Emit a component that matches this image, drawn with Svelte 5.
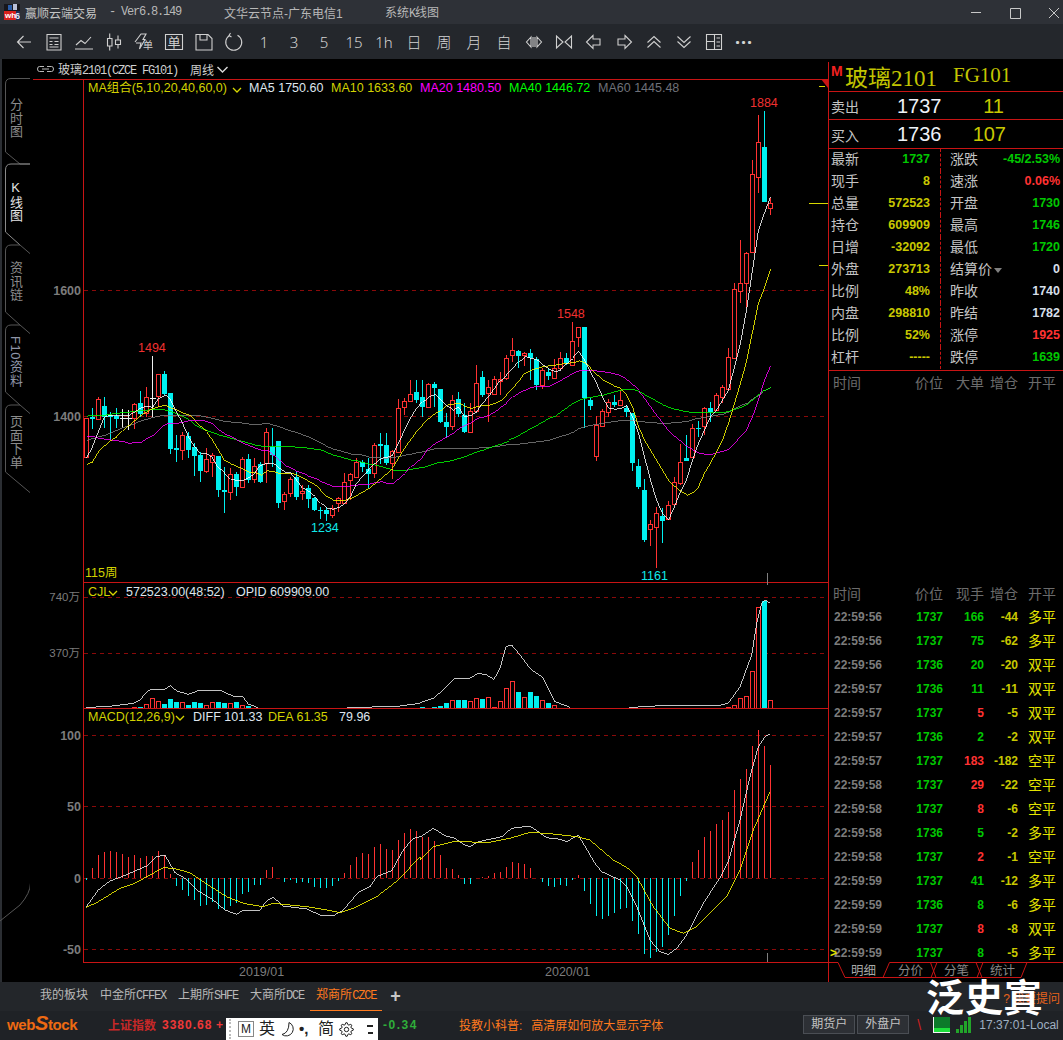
<script lang="ts">
  // Weekly K-line screen for FG101. Chart values are stored in pixels * 3 (tall, easy to read off the pane).
  const y8 = (v: number) => 300 + v / 3

  // kind: 0 red hollow, 1 cyan solid, 2 white doji — [kind, high, top, bottom, low]
  const candles = [
    [0,355,355,470,475],[1,325,350,357,388],[0,292,298,357,360],[1,292,318,350,385],[1,335,345,350,420],[1,325,348,357,385],
    [2,328,355,355,385],[2,330,355,355,390],[0,310,313,355,388],[1,273,308,342,350],[0,262,292,340,350],[2,168,295,295,350],
    [0,223,223,288,320],[1,213,222,283,285],[1,279,279,446,462],[1,405,445,450,486],[0,395,405,450,480],[1,395,408,450,475],
    [1,430,440,467,527],[1,455,465,514,545],[0,445,478,512,520],[0,460,465,485,530],[1,468,468,570,590],[1,500,570,575,640],
    [0,505,523,575,600],[1,515,522,560,588],[0,470,477,560,565],[1,463,477,540,550],[0,475,498,537,550],[1,485,492,547,550],
    [0,385,397,490,548],[1,385,441,465,500],[1,423,423,608,623],[0,575,582,602,630],[0,530,538,578,590],[1,512,532,590,600],
    [0,555,572,580,600],[1,555,565,597,625],[1,590,595,630,632],[1,620,630,634,656],[1,620,630,642,662],[0,615,625,644,655],
    [0,590,595,610,635],[0,520,545,608,610],[0,520,523,540,600],[0,473,487,530,535],[1,480,487,500,515],[1,475,507,522,565],
    [0,430,435,520,535],[1,398,432,437,492],[1,400,435,488,495],[0,450,453,488,538],[0,297,325,455,457],[0,295,304,322,345],
    [0,240,282,302,305],[1,240,276,300,310],[1,240,292,322,350],[0,250,253,322,325],[1,245,253,265,320],[1,268,268,365,370],
    [1,340,366,380,413],[0,285,299,377,390],[1,275,297,342,350],[1,310,345,395,400],[0,310,332,395,400],[0,195,250,332,335],
    [1,213,232,285,290],[0,240,262,280,365],[0,228,238,282,285],[0,215,238,243,285],[0,165,175,235,240],[0,113,151,166,185],
    [1,150,154,167,205],[0,155,160,166,198],[1,148,160,175,240],[1,172,178,255,270],[0,205,210,255,268],[1,205,217,228,240],
    [0,178,205,233,233],[0,155,175,205,210],[1,160,175,190,195],[0,65,124,195,195],[0,82,82,112,140],[1,82,82,295,385],
    [1,295,300,318,330],[0,348,375,467,483],[0,327,334,379,380],[0,298,305,335,350],[1,285,305,315,320],[0,270,301,315,318],
    [1,315,323,335,350],[1,338,338,488,513],[1,478,498,560,568],[1,538,570,720,725],[0,660,673,688,738],[0,622,638,682,803],
    [1,625,648,662,728],[0,603,616,658,660],[0,530,545,612,612],[0,432,485,548,556],[1,405,475,482,482],[0,372,385,472,475],
    [1,362,384,388,412],[0,320,325,379,405],[1,307,325,337,365],[0,280,284,330,332],[0,255,262,290,310],[0,145,172,268,270],
    [0,-51,-33,174,174],[0,-180,-51,-27,9],[0,-144,-141,-51,24],[0,-420,-378,-144,-144],[0,-555,-474,-369,-321],[1,-567,-459,-294,-294],
    [0,-306,-291,-276,-255],
  ]

  const ma = [
    { color: '#808080', ys: [420,415,410,405,398,390,382,377,370,362,358,352,348,345,345,345,346,346,347,348,352,356,360,365,366,367,370,372,373,372,370,375,380,388,393,398,405,412,420,430,440,448,452,457,462,462,466,472,473,474,474,472,470,465,462,458,455,450,446,445,445,445,445,445,445,445,442,442,440,437,434,433,432,430,428,425,423,420,415,408,404,396,385,380,376,373,370,367,364,362,362,362,364,366,368,369,371,370,367,366,365,358,355,352,349,345,342,335,325,315,310,295,285,270,262] },
    { color: '#00ff00', ys: [348,347,346,345,342,340,338,336,334,332,330,328,328,330,335,342,350,360,375,385,392,398,405,410,415,420,425,430,436,438,438,438,438,438,440,442,443,445,448,450,458,465,470,475,480,482,488,492,495,500,505,510,512,512,508,505,502,497,490,487,485,480,475,470,462,455,450,443,437,432,425,415,405,395,385,375,365,355,348,335,322,310,300,295,292,288,285,280,275,270,268,268,275,285,295,305,315,323,328,332,335,338,338,338,338,338,338,333,328,322,312,298,282,270,262] },
    { color: '#ff00ff', ys: [408,410,415,418,420,422,425,430,428,427,415,405,388,373,370,370,366,362,360,360,365,372,390,403,410,420,430,437,445,450,450,465,480,497,505,515,520,530,535,545,552,560,560,560,557,555,553,552,548,545,550,550,535,520,500,485,470,445,430,420,410,400,385,375,368,355,352,345,335,320,308,290,278,270,262,260,260,258,250,240,230,220,212,210,210,213,215,218,222,228,240,255,272,295,320,345,368,392,410,425,440,450,460,463,463,458,453,448,430,410,390,350,300,240,198] },
    { color: '#ffff00', ys: [493,485,455,435,420,410,392,375,360,345,335,325,320,316,325,330,340,345,362,380,395,420,450,482,492,500,508,516,518,525,512,515,520,520,520,525,535,545,555,570,590,600,600,600,595,585,575,565,550,535,520,505,475,445,420,395,375,355,340,330,315,312,310,320,325,320,315,315,310,300,285,265,245,220,210,205,200,197,195,192,190,188,182,190,205,225,240,250,260,265,285,320,380,420,450,480,510,540,560,575,585,577,560,520,490,455,420,370,310,250,185,96,9,-36,-93] },
    { color: '#ffffff', ys: [475,440,395,350,345,345,345,345,335,322,320,322,295,285,300,335,370,410,440,460,462,475,505,520,538,542,540,532,520,495,490,490,505,517,518,540,565,575,590,610,625,628,622,610,590,550,530,510,490,475,472,465,430,390,355,325,305,290,283,300,318,330,320,350,345,335,310,290,265,240,225,205,185,170,175,180,195,208,215,210,190,175,153,180,215,250,290,325,328,325,315,350,400,470,540,600,640,660,620,575,540,480,430,390,350,330,300,270,200,129,30,-90,-210,-261,-309] },
  ]

  const cx = (i: number) => 86 + 6 * i + 0.5
  const maPoints = (ys: number[]) => ys.map((v, i) => `${cx(i)},${y8(v).toFixed(1)}`).join(' ')

  // lower panes are read in px*3 too, baseline y = 580
  const y6 = (v: number) => 580 + v / 3
  const traced = (left: number[][], right: number[][]) =>
    [...left.map(([x, y]) => [x / 3, y6(y)]), ...right.map(([x, y]) => [420 + x / 3, y6(y)])]
      .map(([x, y]) => `${x.toFixed(1)},${y.toFixed(1)}`)
      .join(' ')

  const volBars = [
    [8,382,0],[9,382,1],[10,373,0],[11,355,0],[12,364,0],[13,373,1],[14,357,1],[15,366,1],[16,367,0],[17,376,1],[18,366,1],[19,369,1],
    [20,376,0],[21,367,0],[22,366,1],[23,369,1],[24,370,0],[25,366,1],[26,376,0],[27,378,1],[28,383,1],
    [56,382,1],[58,381,1],[59,378,1],[60,370,1],[61,361,0],[62,360,1],[63,360,1],[64,364,0],[65,355,0],[66,357,1],[67,352,0],[68,382,0],
    [69,364,0],[70,325,0],[71,304,0],[72,336,1],[73,352,0],[74,336,1],[75,348,1],[76,361,0],[77,370,1],[78,376,0],
    [107,382,0],[108,376,0],[109,355,0],[110,349,0],[111,273,0],[112,82,0],[113,62,1],[114,361,0],
  ]
  const volLineA = traced(
    [[258,382],[320,380],[400,370],[420,360],[440,335],[455,328],[490,330],[512,317],[530,333],[565,343],[600,330],[620,333],[660,330],[680,340],[700,348],[728,350],[745,372],[775,383]],
    [],
  )
  const volLineB = traced(
    [[1040,383],[1150,380],[1200,378],[1260,370]],
    [[0,368],[40,355],[70,330],[105,295],[150,295],[175,280],[200,285],[222,298],[240,265],[258,200],[275,195],[300,225],[332,268],[368,292],[405,365],[450,382]],
  )
  const volLineC = traced(
    [],
    [[628,382],[680,380],[718,377],[895,377],[925,370],[960,320],[995,225],[1010,130],[1025,70],[1035,60],[1050,70]],
  )

  const macdEnds = [
    900,865,825,817,813,816,822,831,826,834,829,827,813,825,882,918,930,947,960,978,975,965,987,990,978,970,942,935,915,915,870,862,893,905,900,908,905,908,920,924,924,917,903,880,855,832,820,822,801,793,808,810,780,758,747,753,
    772,770,783,825,865,867,885,911,911,893,892,888,880,876,861,847,849,852,864,895,905,918,920,915,917,899,885,932,971,1007,1017,1007,998,987,983,1022,1061,1122,1133,1115,1100,1065,1008,948,902,846,810,770,753,732,720,696,630,597,567,498,450,498,555,
  ]
  const diffLine = traced(
    [[258,982],[295,930],[330,903],[370,888],[400,875],[440,858],[470,830],[495,825],[525,878],[555,895],[590,930],[640,960],[675,990],[710,1003],[730,990],[780,990],[800,962],[820,952],[850,978],[920,987],[960,1005],[1000,1007],[1030,990],[1075,937],[1110,920],[1130,890],[1175,872],[1210,810],[1240,775],[1260,770]],
    [[0,772],[40,745],[80,770],[100,772],[135,795],[150,800],[175,785],[245,770],[275,745],[330,738],[380,773],[420,778],[440,785],[475,765],[525,850],[545,875],[600,900],[620,920],[650,980],[690,1080],[720,1115],[745,1123],[770,1105],[800,1065],[850,970],[905,885],[925,845],[960,720],[990,590],[1015,500],[1035,470],[1050,462]],
  )
  const deaLine = traced(
    [[258,982],[290,968],[360,925],[400,912],[450,885],[490,863],[520,865],[570,878],[620,912],[680,950],[730,970],[790,980],[820,970],[920,980],[980,990],[1020,998],[1060,985],[1130,950],[1195,900],[1260,830]],
    [[0,840],[40,800],[100,785],[210,787],[270,775],[330,757],[400,762],[470,770],[510,780],[580,840],[620,862],[650,890],[700,980],[750,1045],[790,1060],[830,1040],[870,1000],[920,950],[960,870],[1000,750],[1050,635]],
  )

  const toolIcons = [
    'M17 10H4M9.5 4L3.5 10L9.5 16',
    'M3 2.5H17V18H3ZM5.5 6H14.5M5.5 9.5H8.5M10.5 9.5H14.5M5.5 12.5H8.5M10.5 12.5H14.5M5.5 15H14.5',
    'M1 17H19M2 13L7 8.5L11 11.5L17 5',
    'M3.5 6.5H8V14H3.5ZM5.7 1.5V6.5M5.7 14V18.5M11.5 8H16.5V12.5H11.5ZM14 3.5V8M14 12.5V16.5',
  ]
  const periods = ['1', '3', '5', '15', '1h', '日', '周', '月', '自']

  const tabs = [
    { label: '分时图' },
    { label: 'K线图', active: true },
    { label: '资讯链' },
    { label: 'F10资料', f10: true },
    { label: '页面下单' },
  ]

  const quote = [
    ['最新', '1737', 'g', '涨跌', '-45/2.53%', 'g'],
    ['现手', '8', 'y', '速涨', '0.06%', 'r'],
    ['总量', '572523', 'y', '开盘', '1730', 'g'],
    ['持仓', '609909', 'y', '最高', '1746', 'g'],
    ['日增', '-32092', 'y', '最低', '1720', 'g'],
    ['外盘', '273713', 'y', '结算价', '0', 'w'],
    ['比例', '48%', 'y', '昨收', '1740', 'w'],
    ['内盘', '298810', 'y', '昨结', '1782', 'w'],
    ['比例', '52%', 'y', '涨停', '1925', 'r'],
    ['杠杆', '-----', 'y', '跌停', '1639', 'g'],
  ]

  const ticks = [
    ['22:59:56', '1737', '166', 'g', '-44', '多平'],
    ['22:59:56', '1737', '75', 'g', '-62', '多平'],
    ['22:59:56', '1736', '20', 'g', '-20', '双平'],
    ['22:59:57', '1736', '11', 'g', '-11', '双平'],
    ['22:59:57', '1737', '5', 'r', '-5', '双平'],
    ['22:59:57', '1736', '2', 'g', '-2', '双平'],
    ['22:59:57', '1737', '183', 'r', '-182', '空平'],
    ['22:59:58', '1737', '29', 'r', '-22', '空平'],
    ['22:59:58', '1737', '8', 'r', '-6', '空平'],
    ['22:59:58', '1736', '5', 'g', '-2', '多平'],
    ['22:59:58', '1737', '2', 'r', '-1', '空平'],
    ['22:59:59', '1737', '41', 'g', '-12', '多平'],
    ['22:59:59', '1736', '8', 'g', '-6', '多平'],
    ['22:59:59', '1737', '8', 'r', '-8', '双平'],
    ['22:59:59', '1737', '8', 'g', '-5', '多平'],
  ]

  const exchanges = [
    ['我的板块', ''],
    ['中金所', 'CFFEX'],
    ['上期所', 'SHFE'],
    ['大商所', 'DCE'],
    ['郑商所', 'CZCE'],
  ]

  // 8-tooth gear outline for the input method bar
  const gearPath = Array.from({ length: 32 }, (_, k) => {
    const a = ((k - 0.5) / 32) * Math.PI * 2
    const r = k % 4 < 2 ? 6.8 : 5
    return `${k ? 'L' : 'M'}${(7.5 + r * Math.cos(a)).toFixed(2)} ${(7.5 + r * Math.sin(a)).toFixed(2)}`
  }).join('') + 'Z'
</script>

{#snippet chevron(x: number, y: number, color: string)}
  <polyline class="chev" points="{x},{y} {x + 4},{y + 4} {x + 8},{y}" stroke={color} />
{/snippet}

<div class="app">
  <header class="titlebar">
    <svg class="logo" width="16" height="16" viewBox="0 0 16 16">
      <rect width="16" height="16" fill="#17171c" />
      <rect x="0" y="7" width="13" height="9" fill="#d8211c" />
      <rect x="4" y="1" width="4" height="5" fill="#2a5ca8" />
      <rect x="9" y="0" width="4" height="6" fill="#b8c0d8" />
      <rect x="12" y="7" width="4" height="9" fill="#1b2c58" />
      <text x="1" y="14" class="logo-text">wh</text>
      <text x="11" y="15" class="logo-six">6</text>
    </svg>
    <span class="app-name">赢顺云端交易</span>
    <span class="version">- Ver6.8.149</span>
    <span class="node">文华云节点-广东电信1</span>
    <span class="sys">系统<span class="latin">K</span>线图</span>
    <div class="win-ctl">
      <svg width="88" height="14" viewBox="0 0 88 14" fill="none" stroke="#c8c8c8">
        <path d="M0 7.5H10M39.5 3.5H49.5V13.5H39.5ZM78 3L88 13M88 3L78 13" />
      </svg>
    </div>
  </header>

  <nav class="toolbar">
    {#each toolIcons as d}
      <span class="tool">
        <svg width="20" height="20" viewBox="0 0 20 20"><path {d} /></svg>
      </span>
    {/each}
    <span class="tool">
      <svg width="20" height="20" viewBox="0 0 20 20">
        <path d="M1 10L7 2H12L9 7.5H11L5.5 17L7 11H2" />
        <text x="9" y="17" class="icon-char">单</text>
      </svg>
    </span>
    <span class="tool">
      <svg width="20" height="20" viewBox="0 0 20 20">
        <path d="M1.5 2.5H18.5V17.5H1.5Z" />
        <text x="3.5" y="15" class="icon-char big">单</text>
      </svg>
    </span>
    <span class="tool">
      <svg width="20" height="20" viewBox="0 0 20 20"><path d="M2 2.5H14L18 6.5V18H2ZM6 2.5V8H13V2.5" /></svg>
    </span>
    <span class="tool">
      <svg width="20" height="20" viewBox="0 0 20 20"><path d="M13.5 3.2A8 8 0 1 1 6 3.2M6.5 1L5 3.5L7.5 5" /></svg>
    </span>
    {#each periods as p}
      <span class="tool text-tool">{p}</span>
    {/each}
    <span class="tool">
      <svg width="20" height="20" viewBox="0 0 20 20"><path d="M7 5L2.5 10L7 15ZM13 5L17.5 10L13 15ZM9 5V15M11 5V15" /></svg>
    </span>
    <span class="tool">
      <svg width="20" height="20" viewBox="0 0 20 20"><path d="M2.5 4V16L9 10ZM17.5 4V16L11 10Z" /></svg>
    </span>
    <span class="tool">
      <svg width="20" height="20" viewBox="0 0 20 20"><path d="M9 3.5L2.5 10L9 16.5V13H16V7H9Z" /></svg>
    </span>
    <span class="tool">
      <svg width="20" height="20" viewBox="0 0 20 20"><path d="M11 3.5L17.5 10L11 16.5V13H4V7H11Z" /></svg>
    </span>
    <span class="tool">
      <svg width="20" height="20" viewBox="0 0 20 20"><path d="M3.5 10.5L10 4.5L16.5 10.5M3.5 15.5L10 9.5L16.5 15.5" /></svg>
    </span>
    <span class="tool">
      <svg width="20" height="20" viewBox="0 0 20 20"><path d="M3.5 4.5L10 10.5L16.5 4.5M3.5 9.5L10 15.5L16.5 9.5" /></svg>
    </span>
    <span class="tool">
      <svg width="20" height="20" viewBox="0 0 20 20"><path d="M2.5 2.5H17.5V17.5H2.5ZM10.5 2.5V17.5M2.5 9.5H10.5M12.5 6H16M12.5 10H16M12.5 14H16" /></svg>
    </span>
    <span class="tool text-tool dots">···</span>
  </nav>

  <div class="body">
    <aside class="rail">
      <svg class="rail-lines" width="30" height="923" viewBox="0 59 30 923" fill="none" stroke="#565656">
        <path d="M5.5 152V84Q5.5 78.5 11 78.5H30.5V164H20L5.5 152" />
        <path stroke="#8a8a8a" d="M30.5 164H11Q5.5 164 5.5 170V232L20 245" />
        <path d="M20 245H11Q5.5 245 5.5 251V312L20 325M20 245L30.5 254V325" />
        <path d="M20 325H11Q5.5 325 5.5 331V392L20 405M20 325L30.5 334V405" />
        <path d="M20 405H11Q5.5 405 5.5 411V472L30.5 493M20 405L30.5 414V883Q30.5 893 20 905L0 921" />
      </svg>
      {#each tabs as tab}
        <div class="side-tab" class:active={tab.active} class:f10={tab.f10}>{tab.label}</div>
      {/each}
    </aside>

    <section class="charts">
      <div class="symbol-bar">
        <svg width="17" height="8" viewBox="0 0 17 8" fill="none" stroke="#b8b8b8">
          <path d="M7 1.5H2.5Q0.5 1.5 0.5 4T2.5 6.5H7M10 1.5H14.5Q16.5 1.5 16.5 4T14.5 6.5H10M5 4H12" />
        </svg>
        <span class="symbol">玻璃<span class="latin">2101(CZCE FG101)</span></span>
        <span class="period">周线</span>
        <svg width="11" height="7" viewBox="0 0 11 7" fill="none" stroke="#d8d8d8" stroke-width="1.4"><path d="M0.5 1L5.5 6L10.5 1" /></svg>
      </div>

      <svg class="pane" width="798" height="503" viewBox="30 79 798 503">
        <g class="crisp">
          <line x1="33" y1="79.5" x2="828" y2="79.5" class="frame" />
          <line x1="83.5" y1="79" x2="83.5" y2="582" class="frame" />
          <line x1="84" y1="290.5" x2="828" y2="290.5" class="grid" />
          <line x1="84" y1="416.5" x2="828" y2="416.5" class="grid" />
          <path d="M809 203.5H828M819 265.5H828M819 86.5H825" stroke="#d8d800" />
          <line x1="767.5" y1="573" x2="767.5" y2="582" stroke="#808080" />
          {#each candles as [kind, hi, top, bot, lo], i}
            {@const t = Math.round(y8(top))}
            {@const b = Math.round(y8(bot))}
            <line x1={cx(i)} x2={cx(i)} y1={Math.round(y8(hi))} y2={Math.round(y8(lo))} stroke={kind === 0 ? '#ff3232' : kind === 1 ? '#00f0f0' : '#f0f0f0'} />
            {#if kind === 0}
              <rect x={cx(i) - 2} y={t + 0.5} width="4" height={b - t} fill="#000" stroke="#ff3232" />
            {:else if kind === 1}
              <rect x={cx(i) - 2.5} y={t} width="5" height={Math.max(b - t, 1)} fill="#00f0f0" />
            {:else}
              <line x1={cx(i) - 3} x2={cx(i) + 3} y1={t + 0.5} y2={t + 0.5} stroke="#f0f0f0" />
            {/if}
          {/each}
          {#each ma as line}
            <polyline class="curve" points={maPoints(line.ys)} stroke={line.color} />
          {/each}
        </g>
        <polygon points="821,79 828,79 828,88" fill="#c81414" />

        <text x="81" y="295" class="axis" text-anchor="end">1600</text>
        <text x="81" y="421" class="axis" text-anchor="end">1400</text>

        <text x="88" y="92" class="legend y">MA组合(5,10,20,40,60,0)</text>
        {@render chevron(233, 88, '#d8d800')}
        <text x="249" y="92" class="legend w">MA5 1750.60</text>
        <text x="331" y="92" class="legend y">MA10 1633.60</text>
        <text x="420" y="92" class="legend" fill="#ff00ff">MA20 1480.50</text>
        <text x="509" y="92" class="legend" fill="#00ff00">MA40 1446.72</text>
        <text x="598" y="92" class="legend" fill="#6e7078">MA60 1445.48</text>

        <text x="138" y="352" class="mark red">1494</text>
        <text x="557" y="318" class="mark red">1548</text>
        <text x="750" y="107" class="mark red">1884</text>
        <text x="311" y="532" class="mark cyan">1234</text>
        <text x="641" y="580" class="mark cyan">1161</text>
        <text x="85" y="577" class="legend y">115周</text>
      </svg>

      <svg class="pane" width="798" height="126" viewBox="30 582 798 126">
        <g class="crisp">
          <line x1="84" y1="582.5" x2="828" y2="582.5" class="frame" />
          <line x1="83.5" y1="582" x2="83.5" y2="708" class="frame" />
          <line x1="84" y1="597.5" x2="828" y2="597.5" class="grid" />
          <line x1="84" y1="653.5" x2="828" y2="653.5" class="grid" />
          <line x1="767.5" y1="582" x2="767.5" y2="585" stroke="#808080" />
          {#each volBars as [i, top, cyan]}
            {@const t = Math.round(y6(top))}
            {#if cyan}
              <rect x={cx(i) - 2.5} y={t} width="5" height={708 - t} fill="#00f0f0" />
            {:else}
              <rect x={cx(i) - 2} y={t + 0.5} width="4" height={708 - t} fill="#000" stroke="#ff3232" />
            {/if}
          {/each}
          <polyline class="curve" points={volLineA} stroke="#f4f4f4" />
          <polyline class="curve" points={volLineB} stroke="#f4f4f4" />
          <polyline class="curve" points={volLineC} stroke="#f4f4f4" />
        </g>
        <text x="80" y="601" class="axis thin" text-anchor="end">740万</text>
        <text x="80" y="657" class="axis thin" text-anchor="end">370万</text>
        <text x="88" y="596" class="legend y">CJL</text>
        {@render chevron(109, 591, '#d8d800')}
        <text x="126" y="596" class="legend w">572523.00(48:52)</text>
        <text x="236" y="596" class="legend w">OPID 609909.00</text>
      </svg>

      <svg class="pane" width="798" height="255" viewBox="30 708 798 255">
        <g class="crisp">
          <line x1="83" y1="708.5" x2="828" y2="708.5" class="frame" />
          <line x1="83" y1="962.5" x2="828" y2="962.5" class="frame" />
          <line x1="83.5" y1="708" x2="83.5" y2="962" class="frame" />
          <line x1="84" y1="735.5" x2="828" y2="735.5" class="grid" />
          <line x1="84" y1="806.5" x2="828" y2="806.5" class="grid" />
          <line x1="84" y1="878.5" x2="828" y2="878.5" class="grid" />
          <line x1="84" y1="949.5" x2="828" y2="949.5" class="grid" />
          <line x1="767.5" y1="953" x2="767.5" y2="962" stroke="#808080" />
          {#each macdEnds as end, i}
            {#if end !== 895}
              <line x1={cx(i)} x2={cx(i)} y1={y6(895)} y2={Math.round(y6(end))} stroke={end < 895 ? '#ff3232' : '#00f0f0'} />
            {/if}
          {/each}
          <polyline class="curve" points={diffLine} stroke="#f4f4f4" />
          <polyline class="curve" points={deaLine} stroke="#ffff00" />
        </g>
        <text x="81" y="740" class="axis" text-anchor="end">100</text>
        <text x="81" y="811" class="axis" text-anchor="end">50</text>
        <text x="81" y="883" class="axis" text-anchor="end">0</text>
        <text x="81" y="954" class="axis" text-anchor="end">-50</text>
        <text x="88" y="721" class="legend y">MACD(12,26,9)</text>
        {@render chevron(176, 716, '#d8d800')}
        <text x="193" y="721" class="legend w">DIFF 101.33</text>
        <text x="268" y="721" class="legend y">DEA 61.35</text>
        <text x="339" y="721" class="legend w">79.96</text>
      </svg>

      <div class="dates">
        <span class="date-2019">2019/01</span>
        <span class="date-2020">2020/01</span>
      </div>
    </section>

    <aside class="panel">
      <div class="contract">
        <span class="m">M</span>
        <span class="name">玻璃2101</span>
        <span class="code">FG101</span>
      </div>
      <div class="book">
        <span class="lbl">卖出</span><span class="price">1737</span><span class="qty">11</span>
      </div>
      <div class="book bid">
        <span class="lbl">买入</span><span class="price">1736</span><span class="qty">107</span>
      </div>
      <div class="quote">
        {#each quote as [l1, v1, c1, l2, v2, c2]}
          <div class="q-row">
            <div class="q-left"><span class="lbl">{l1}</span><b class={c1}>{v1}</b></div>
            <div class="q-right">
              <span class="lbl">{l2}{#if l2 === '结算价'}<i class="drop"></i>{/if}</span><b class={c2}>{v2}</b>
            </div>
          </div>
        {/each}
      </div>
      <div class="tick-head"><span>时间</span><span>价位</span><span>大单</span><span>增仓</span><span>开平</span></div>
      <div class="spacer"></div>
      <div class="tick-head second"><span>时间</span><span>价位</span><span>现手</span><span>增仓</span><span>开平</span></div>
      <div class="ticks">
        {#each ticks as [time, price, qty, side, chg, kind], i}
          <div class="tick">
            {#if i === ticks.length - 1}<span class="cursor">&gt;</span>{/if}
            <span class="time">{time}</span>
            <b class="g">{price}</b>
            <b class={side}>{qty}</b>
            <b class="y">{chg}</b>
            <span class="kind">{kind}</span>
          </div>
        {/each}
      </div>
      <svg class="detail-tabs" width="234" height="20" viewBox="829 962 234 20" fill="none" stroke="#c81414">
        <path d="M829 962.5H838L845 977.5H883L889.5 962.5H1063" />
        <path d="M883 977.5H936L930.5 962.5M931 977.5L937 962.5M931 977.5H982L976 962.5M977 977.5L983 962.5M977 977.5H1021L1027 962.5" />
        <text x="851" y="975" class="tab-on">明细</text>
        <text x="898" y="975" class="tab-off">分价</text>
        <text x="944" y="975" class="tab-off">分笔</text>
        <text x="990" y="975" class="tab-off">统计</text>
      </svg>
    </aside>
  </div>

  <div class="tabbar">
    {#each exchanges as [name, code], i}
      <span class="ex" class:current={i === 4}>{name}{#if code}<span class="latin">{code}</span>{/if}</span>
    {/each}
    <span class="add">+</span>
    <span class="ask"><span class="ask-q">?</span>我要提问</span>
  </div>

  <footer class="status">
    <span class="brand">web<span class="brand-s">S</span>tock</span>
    <span class="index">上证指数</span>
    <b class="index-val">3380.68</b>
    <b class="index-val plus">+</b>
    <b class="index-chg">-0.34</b>
    <span class="notice">投教小科普:</span>
    <span class="notice msg">高清屏如何放大显示字体</span>
    <span class="acct first">期货户</span>
    <span class="acct">外盘户</span>
    <span class="slash">\</span>
    <svg class="net" width="17" height="16" viewBox="0 0 17 16">
      <rect width="17" height="16" fill="#0c7a2a" />
      <rect y="11" width="17" height="5" fill="#1ee03c" />
      <path d="M0.5 16V0M0 15.5H17" stroke="#f4f4f4" />
    </svg>
    <svg class="signal" width="16" height="16" viewBox="0 0 16 16" fill="#22a52a">
      <rect x="0" y="12" width="3" height="4" /><rect x="4" y="8" width="3" height="8" /><rect x="8" y="4" width="3" height="12" /><rect x="12" y="0" width="3" height="16" />
    </svg>
    <span class="clock">17:37:01-Local</span>
  </footer>

  <!-- input method bar and the watermark sit over the window -->
  <div class="ime">
    <i class="grip"></i>
    <span class="ime-m">M</span>
    <span class="ime-ch">英</span>
    <svg width="14" height="16" viewBox="0 0 14 16" fill="none" stroke="#222"><path d="M9 1.5A7 7 0 1 1 2 13.5Q9 12 9 1.5Z" /></svg>
    <span class="ime-p">•,</span>
    <span class="ime-ch">简</span>
    <svg width="15" height="15" viewBox="0 0 15 15" fill="none" stroke="#222"><path d={gearPath} /><circle cx="7.5" cy="7.5" r="2.2" /></svg>
    <span class="ime-more"></span>
  </div>
  <div class="watermark">泛史寘</div>
</div>

<style>
  :global(body) {
    background: #000;
  }

  .app {
    position: relative;
    width: 1063px;
    height: 1040px;
    overflow: hidden;
    display: flex;
    flex-direction: column;
    background: #000;
    font-family: 'Liberation Sans', 'Noto Sans CJK SC', sans-serif;
    font-size: 12px;
    color: #c8c8c8;
  }

  /* narrow latin mixed into Chinese labels */
  .latin {
    font: 12px 'Liberation Mono', monospace;
    letter-spacing: -1.2px;
  }

  /* title bar */
  .titlebar {
    height: 24px;
    background: #2e3137;
    display: flex;
    align-items: center;
    position: relative;
    flex: none;
  }
  .logo {
    margin-left: 4px;
  }
  .logo-text {
    font: bold 8px 'Liberation Sans', sans-serif;
    fill: #fff;
  }
  .logo-six {
    font: bold 9px 'Liberation Sans', sans-serif;
    fill: #dfe6f8;
  }
  .app-name {
    margin-left: 5px;
    width: 72px;
    white-space: nowrap;
    color: #c4c4c4;
  }
  .version {
    margin-left: 12px;
    width: 87px;
    font: 12px 'Liberation Mono', monospace;
    letter-spacing: -1.2px;
    color: #b8b8b8;
    white-space: nowrap;
  }
  .node {
    margin-left: 28px;
    width: 119px;
    white-space: nowrap;
    color: #b8b8b8;
  }
  .sys {
    margin-left: 42px;
    white-space: nowrap;
    color: #b8b8b8;
  }
  .win-ctl {
    margin-left: auto;
    margin-right: 4px;
    display: flex;
  }

  /* toolbar */
  .toolbar {
    height: 35px;
    flex: none;
    background: #24272c;
    display: flex;
    align-items: center;
    padding-left: 9px;
    box-sizing: border-box;
  }
  .tool {
    width: 30px;
    display: flex;
    justify-content: center;
    color: #d4d4d4;
  }
  .tool svg {
    fill: none;
    stroke: #d0d0d0;
    stroke-width: 1.1;
  }
  .icon-char {
    font-size: 10px;
    stroke: none;
    fill: #d0d0d0;
  }
  .icon-char.big {
    font-size: 13px;
  }
  .text-tool {
    font-family: 'Noto Sans', 'Noto Sans CJK SC', sans-serif;
    font-weight: 300;
    font-size: 15px;
    line-height: 20px;
  }
  .dots {
    font-weight: bold;
    font-size: 18px;
    letter-spacing: 1px;
  }

  /* main area */
  .body {
    height: 923px;
    flex: none;
    display: flex;
  }

  .rail {
    position: relative;
    width: 30px;
    flex: none;
    padding-top: 20px;
    box-sizing: border-box;
    border-left: 2px solid #2b2e33;
    display: flex;
    flex-direction: column;
    margin-right: 0;
  }
  .rail-lines {
    position: absolute;
    left: -2px;
    top: 0;
  }
  .side-tab {
    position: relative;
    height: 80px;
    writing-mode: vertical-rl;
    text-align: center;
    width: 28px;
    padding-right: 2px;
    box-sizing: border-box;
    font-size: 13px;
    line-height: 28px;
    letter-spacing: 0.5px;
    color: #8a8a8a;
    padding-bottom: 7px;
    display: flex;
    justify-content: center;
    align-items: center;
    text-orientation: mixed;
  }
  .side-tab:first-of-type {
    height: 86px;
  }
  .side-tab.active {
    color: #e4e4e4;
    text-orientation: upright;
  }
  .side-tab.f10 {
    color: #8f95a8;
  }

  .charts {
    width: 798px;
    flex: none;
    display: flex;
    flex-direction: column;
  }
  .symbol-bar {
    height: 20px;
    flex: none;
    display: flex;
    align-items: center;
    padding-left: 7px;
    box-sizing: border-box;
    color: #d0d0d0;
  }
  .symbol {
    margin-left: 4px;
    width: 128px;
    white-space: nowrap;
  }
  .period {
    margin-left: 4px;
    margin-right: 3px;
  }
  .pane {
    display: block;
    flex: none;
  }
  .crisp {
    shape-rendering: crispEdges;
  }
  .curve {
    fill: none;
    stroke-width: 0.8;
  }
  .frame {
    stroke: #c81414;
  }
  .grid {
    stroke: #8a0a0a;
    stroke-dasharray: 4 4;
  }
  .axis {
    font: bold 12.5px 'Liberation Sans', sans-serif;
    fill: #7c7c7c;
  }
  .axis.thin {
    font: 11.5px 'Liberation Sans', 'Noto Sans CJK SC', sans-serif;
  }
  .legend {
    font: 12.5px 'Liberation Sans', 'Noto Sans CJK SC', sans-serif;
  }
  .legend.y {
    fill: #d2d200;
  }
  .legend.w {
    fill: #dfe6ee;
  }
  .mark {
    font: 12.5px 'Liberation Sans', sans-serif;
  }
  .mark.red {
    fill: #f03030;
  }
  .mark.cyan {
    fill: #10e8e8;
  }
  .chev {
    fill: none;
    stroke-width: 1.3;
  }
  .dates {
    height: 19px;
    flex: none;
    position: relative;
    color: #7c7c7c;
    font-size: 12.5px;
    line-height: 19px;
  }
  .date-2019,
  .date-2020 {
    position: absolute;
    top: 0;
  }
  .date-2019 {
    left: 209px;
  }
  .date-2020 {
    left: 515px;
  }

  /* right panel */
  .panel {
    width: 235px;
    flex: none;
    margin-top: 3px;
    box-sizing: border-box;
    border-left: 1px solid #c81414;
    display: flex;
    flex-direction: column;
    height: 920px;
    position: relative;
  }
  .contract {
    height: 30px;
    flex: none;
    box-sizing: border-box;
    border-bottom: 1px solid #c81414;
    position: relative;
    display: flex;
    align-items: center;
    padding-left: 16px;
    padding-bottom: 2px;
    color: #c2c400;
    white-space: nowrap;
  }
  .m {
    position: absolute;
    left: 2px;
    top: 1px;
    font: bold 14px 'Liberation Sans', sans-serif;
    color: #f02020;
  }
  .name {
    font: 23px 'Liberation Serif', 'Noto Sans CJK SC', serif;
    width: 108px;
  }
  .code {
    font: 21px 'Liberation Serif', serif;
  }
  .book {
    height: 28px;
    flex: none;
    box-sizing: border-box;
    border-bottom: 1px solid #c81414;
    display: flex;
    align-items: center;
    padding-left: 2px;
    padding-top: 1px;
  }
  .book.bid {
    height: 29px;
  }
  .lbl {
    font-size: 14px;
    color: #c4c4c4;
    white-space: nowrap;
  }
  .book .lbl {
    width: 66px;
  }
  .price {
    font-size: 20px;
    color: #eef2f8;
    width: 44px;
    text-align: right;
  }
  .qty {
    font-size: 20px;
    color: #c8c800;
    text-align: right;
  }
  .bid .qty {
    width: 65px;
  }
  .book:not(.bid) .qty {
    width: 63px;
  }
  .quote {
    height: 222px;
    flex: none;
    box-sizing: border-box;
    border-bottom: 1px solid #c81414;
  }
  .q-row {
    height: 22px;
    display: flex;
    line-height: 20px;
  }
  .q-left,
  .q-right {
    display: flex;
    justify-content: space-between;
    height: 22px;
    box-sizing: border-box;
  }
  .q-left {
    width: 112px;
    padding: 0 10px 0 2px;
    border-right: 1px dashed #c81414;
  }
  .q-right {
    width: 122px;
    padding: 0 3px 0 9px;
  }
  .q-row b {
    font-size: 12.5px;
  }
  .g {
    color: #00c800;
  }
  .y {
    color: #c8c800;
  }
  .r {
    color: #ff3232;
  }
  .w {
    color: #d6dfea;
  }
  .drop {
    display: inline-block;
    margin-left: 2px;
    border: 4px solid transparent;
    border-top: 5px solid #808080;
    border-bottom: 0;
    vertical-align: 1px;
  }
  .tick-head,
  .tick {
    display: grid;
    box-sizing: border-box;
    position: relative;
    white-space: nowrap;
  }
  .tick-head {
    grid-template-columns: 82px 28px 41px 34px 1fr;
    height: 24px;
    line-height: 24px;
    flex: none;
    font-size: 14px;
    color: #6c6c6c;
    padding-left: 4px;
  }
  .tick-head span:nth-child(n + 2):nth-child(-n + 4) {
    text-align: right;
  }
  .tick-head span:last-child {
    padding-left: 10px;
  }
  .tick-head.second {
    height: 22px;
    line-height: 22px;
  }
  .spacer {
    flex: 1;
  }
  .ticks {
    height: 357px;
    flex: none;
  }
  .tick {
    grid-template-columns: 82px 27px 41px 34px 1fr;
    padding-left: 5px;
    height: 24px;
    line-height: 24px;
    font-weight: bold;
  }
  .tick b:nth-of-type(n) {
    text-align: right;
  }
  .time {
    color: #7c7c7c;
  }
  .kind {
    font-weight: normal;
    font-size: 14px;
    color: #e4e400;
    padding-left: 10px;
  }
  .cursor {
    position: absolute;
    left: 1px;
    top: 0;
    color: #e4e400;
  }
  .detail-tabs {
    display: block;
    flex: none;
    overflow: visible;
  }
  .tab-on,
  .tab-off {
    font: 12.5px 'Noto Sans CJK SC', sans-serif;
    stroke: none;
    fill: #888;
  }
  .tab-on {
    fill: #a8a8a8;
  }

  /* bottom bars */
  .tabbar {
    height: 29px;
    flex: none;
    background: #23262a;
    display: flex;
    align-items: center;
    padding-left: 40px;
    position: relative;
    box-sizing: border-box;
  }
  .ex {
    margin-right: 12px;
    height: 29px;
    line-height: 27px;
    box-sizing: border-box;
    white-space: nowrap;
    color: #b8b8b8;
  }
  .ex.current {
    color: #ff7a1e;
    margin-left: -6px;
    margin-right: 8px;
    padding: 0 6px;
    border-bottom: 1px solid #ff7a1e;
  }
  .add {
    font: bold 18px 'Liberation Sans', sans-serif;
    color: #c8c8c8;
    margin-left: 0;
  }
  .ask {
    position: absolute;
    right: 3px;
    top: 7px;
    color: #e8641c;
    white-space: nowrap;
  }
  .ask-q {
    margin-right: 2px;
  }

  .status {
    height: 29px;
    flex: none;
    background: #1f2226;
    display: flex;
    align-items: center;
    position: relative;
    padding-bottom: 2px;
    box-sizing: border-box;
    white-space: nowrap;
  }
  .brand {
    margin-left: 7px;
    width: 66px;
    font: bold 15px 'Liberation Sans', sans-serif;
    letter-spacing: -0.4px;
    color: #ee6a12;
  }
  .brand-s {
    font-style: italic;
    font-size: 20px;
    line-height: 10px;
  }
  .index {
    margin-left: 35px;
    width: 48px;
    font-weight: bold;
    color: #c82828;
  }
  .index-val {
    margin-left: 6px;
    width: 48px;
    color: #ee3838;
    letter-spacing: 1px;
    white-space: nowrap;
  }
  .index-val.plus {
    width: 20px;
  }
  .index-chg {
    margin-left: 147px;
    width: 36px;
    color: #2fae3a;
    letter-spacing: 1.5px;
  }
  .notice {
    margin-left: 40px;
    color: #ff7a1e;
  }
  .notice.msg {
    margin-left: 9px;
    width: 272px;
  }
  .acct {
    width: 52px;
    height: 19px;
    box-sizing: border-box;
    border: 1px solid #4a4e54;
    background: #2d3035;
    text-align: center;
    line-height: 17px;
    color: #c4c4c4;
    margin-left: 2px;
  }
  .acct.first {
    margin-left: 0;
  }
  .slash {
    margin-left: 8px;
    color: #d02020;
    font-size: 14px;
    width: 16px;
  }
  .net {
    flex: none;
  }
  .signal {
    margin-left: 6px;
    flex: none;
  }
  .clock {
    margin-left: 7px;
    color: #9fb0c2;
  }

  .ime {
    position: absolute;
    left: 226px;
    top: 1018px;
    width: 152px;
    height: 22px;
    background: #fff;
    display: flex;
    align-items: center;
    color: #222;
    box-sizing: border-box;
    padding-left: 3px;
    gap: 5px;
  }
  .grip {
    width: 3px;
    height: 20px;
    border-left: 2px dotted #bbb;
    margin-right: 1px;
    box-sizing: border-box;
  }
  .ime-m {
    width: 16px;
    height: 16px;
    box-sizing: border-box;
    border: 1px solid #888;
    text-align: center;
    font-size: 12px;
    line-height: 14px;
  }
  .ime-ch {
    font-size: 16px;
    line-height: 20px;
  }
  .ime-p {
    font-weight: bold;
    font-size: 15px;
    line-height: 14px;
    width: 14px;
  }
  .ime-more {
    margin-left: 8px;
    width: 6px;
    height: 9px;
    box-sizing: border-box;
    border-top: 2px solid #222;
    background: linear-gradient(#222, #222) center 5px / 5px 2px no-repeat;
  }
  .watermark {
    position: absolute;
    left: 926px;
    top: 967px;
    font: bold 38px 'Noto Sans CJK SC', sans-serif;
    letter-spacing: 1px;
    color: #fff;
    white-space: nowrap;
  }
</style>
